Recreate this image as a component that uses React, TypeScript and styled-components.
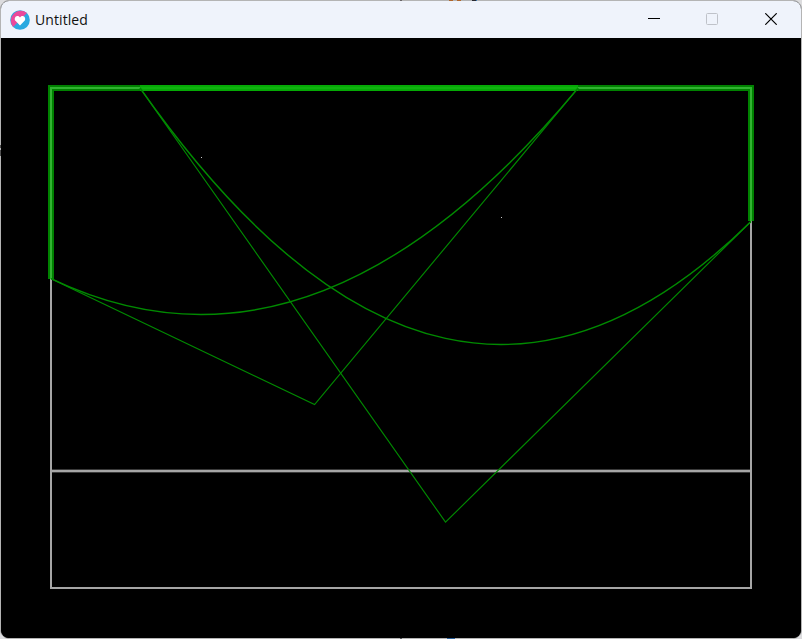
import React from 'react';
import styled, { createGlobalStyle } from 'styled-components';

const GlobalStyle = createGlobalStyle`
  html, body { margin: 0; padding: 0; background: #dcdcde; overflow: hidden; }
  * { box-sizing: border-box; }
`;

const Desktop = styled.div`
  position: relative;
  width: 802px;
  height: 639px;
`;

const Window = styled.main`
  width: 100%;
  height: 100%;
  display: flex;
  flex-direction: column;
  border: 1px solid #b4b4b4;
  border-radius: 9px;
  overflow: hidden;
  background: #000;
`;

const BorderSpeck = styled.i<{ $x: number; $y: number; $w: number; $h?: number; $color: string }>`
  position: absolute;
  left: ${(p) => p.$x}px;
  top: ${(p) => p.$y}px;
  width: ${(p) => p.$w}px;
  height: ${(p) => p.$h ?? 1}px;
  background: ${(p) => p.$color};
`;

const TitleBar = styled.header`
  flex: 0 0 37px;
  display: flex;
  align-items: center;
  padding-left: 9px;
  background: #eff3fb;
`;

const Title = styled.h1`
  flex: 1;
  margin: 0 0 0 5px;
  padding-top: 1px;
  font: 400 14px/20px 'Open Sans', 'Noto Sans', sans-serif;
  letter-spacing: 0.08px;
  color: #111;
`;

const Controls = styled.div`
  display: flex;
  height: 100%;
  padding-right: 1px;
`;

const ControlButton = styled.button<{ $muted?: boolean }>`
  width: 58.5px;
  height: 100%;
  padding: 0 0 1px;
  border: 0;
  background: transparent;
  display: grid;
  place-items: center;
  color: ${(p) => (p.$muted ? '#bfc2c9' : '#000')};
`;

const Glyph = styled.svg`
  display: block;
  fill: none;
  stroke: currentColor;
`;

const Canvas = styled.svg`
  display: block;
  flex: 0 0 600px;
  width: 800px;
  background: #000;
`;

const LEFT = 50;
const RIGHT = 750;
const TOP = 50;
const SWEEP = 433.5;

type Point = { x: number; y: number };
const SITES: Point[] = [
  { x: 200, y: 119 },
  { x: 500, y: 179 },
];

/** Quadratic Bezier for the parabola between a site and the sweep line, clipped to the box. */
function parabola({ x, y }: Point) {
  const focus = y + 0.5;
  const k = 2 * (SWEEP - focus);
  const vertex = (SWEEP + focus) / 2;
  const reach = Math.sqrt((vertex - TOP) * k);
  const at = (px: number) => vertex - (px - x) ** 2 / k;
  const x0 = Math.max(LEFT, x - reach);
  const x1 = Math.min(RIGHT, x + reach);
  const a = { x: x0, y: at(x0) };
  const b = { x: x1, y: at(x1) };
  const cx = (x0 + x1) / 2;
  const c = { x: cx, y: a.y + ((-2 * (x0 - x)) / k) * (cx - x0) };
  return { a, b, c };
}

function LoveIcon() {
  return (
    <svg width="20" height="20" viewBox="0 0 20 20">
      <circle cx="10" cy="10" r="9.8" fill="#2aa9e0" />
      <path d="M3.1 16.9A9.8 9.8 0 0 1 16.9 3.1Z" fill="#ea4a9b" />
      <path
        d="M10 15.4 5.7 11.1C3.9 9.3 4.9 5.9 7.4 5.9c1.3 0 2.1.7 2.6 1.6.5-.9 1.3-1.6 2.6-1.6 2.5 0 3.5 3.4 1.7 5.2Z"
        fill="#fff"
      />
    </svg>
  );
}

export default function App() {
  const [p1, p2] = SITES.map(parabola);
  const border = `M50 ${Math.round(p1.a.y)}V50H750V${Math.round(p2.b.y)}`;
  const overlap = `M${Math.floor(p2.a.x)} 50H${Math.round(p1.b.x)}`;
  return (
    <>
      <GlobalStyle />
      <Desktop>
        <Window>
          <TitleBar>
            <LoveIcon />
            <Title>Untitled</Title>
            <Controls>
              <ControlButton aria-label="Minimize">
                <Glyph width="12" height="12" shapeRendering="crispEdges">
                  <path d="M0 5.5H12" />
                </Glyph>
              </ControlButton>
              <ControlButton aria-label="Maximize" $muted>
                <Glyph width="12" height="12">
                  <rect x="0.5" y="0.5" width="11" height="11" rx="1" />
                </Glyph>
              </ControlButton>
              <ControlButton aria-label="Close">
                <Glyph width="12" height="12" strokeWidth="1.2">
                  <path d="M0.3 0.3 11.7 11.7M11.7 0.3 0.3 11.7" />
                </Glyph>
              </ControlButton>
            </Controls>
          </TitleBar>
          <Canvas viewBox="0 0 800 600" fill="none">
            <path d="M51 431.5H749M51 434.5H749" stroke="#3a3a3a" />
            <rect x="50" y="50" width="700" height="500" stroke="#a6a6a6" strokeWidth="2" />
            <path d="M50 433H750" stroke="#a6a6a6" strokeWidth="2" />
            <path d={border} stroke="#008200" strokeWidth="6" />
            <path d={border} stroke="#32b232" strokeWidth="2" />
            <path d={overlap} stroke="#05aa05" strokeWidth="6" />
            <path d={overlap} stroke="#10b210" strokeWidth="2" />
            {[p1, p2].map(({ a, b, c }) => (
              <g key={c.x} stroke="#008a00">
                <path d={`M${a.x} ${a.y}Q${c.x} ${c.y} ${b.x} ${b.y}`} strokeWidth="1.4" />
                <path d={`M${a.x} ${a.y}L${c.x} ${c.y}L${b.x} ${b.y}`} strokeWidth="1.15" />
              </g>
            ))}
            {SITES.map((s) => (
              <rect key={s.x} x={s.x} y={s.y} width="1" height="1" fill="#c8c8c8" />
            ))}
          </Canvas>
        </Window>
        <BorderSpeck $x={400} $y={0} $w={2} $color="#6a6668" />
        <BorderSpeck $x={449} $y={0} $w={4} $color="#b0662c" />
        <BorderSpeck $x={457} $y={0} $w={4} $color="#b0662c" />
        <BorderSpeck $x={472} $y={0} $w={4} $color="#2b2a30" />
        <BorderSpeck $x={476} $y={0} $w={1} $color="#3478b4" />
        <BorderSpeck $x={400} $y={638} $w={2} $color="#55565a" />
        <BorderSpeck $x={447} $y={638} $w={8} $color="#2a5f9a" />
        <BorderSpeck $x={0} $y={145} $w={1} $h={3} $color="#505050" />
        <BorderSpeck $x={0} $y={150} $w={1} $h={6} $color="#505050" />
      </Desktop>
    </>
  );
}
